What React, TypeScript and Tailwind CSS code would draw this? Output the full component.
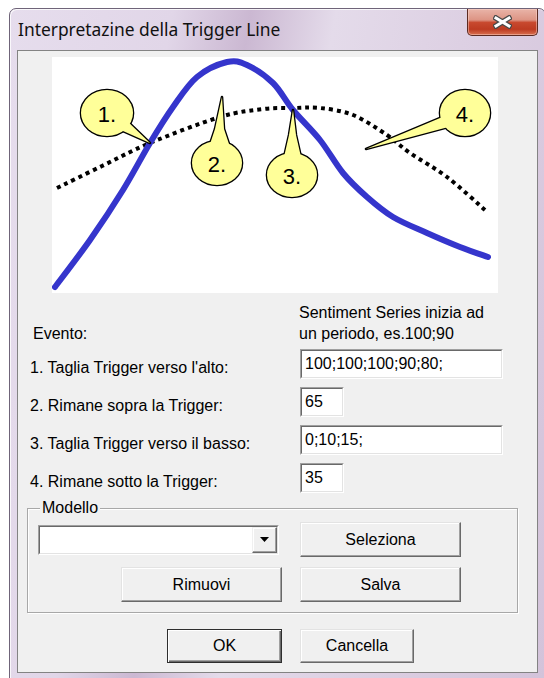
import React from 'react';

type Pt = [number, number];

// catmull-rom -> cubic bezier, so the curves come out smooth
const smooth = (pts: Pt[]) => {
  let d = `M${pts[0][0]} ${pts[0][1]}`;
  for (let i = 0; i < pts.length - 1; i++) {
    const p0 = pts[i - 1] || pts[i];
    const p1 = pts[i];
    const p2 = pts[i + 1];
    const p3 = pts[i + 2] || p2;
    const c1x = p1[0] + (p2[0] - p0[0]) / 6;
    const c1y = p1[1] + (p2[1] - p0[1]) / 6;
    const c2x = p2[0] - (p3[0] - p1[0]) / 6;
    const c2y = p2[1] - (p3[1] - p1[1]) / 6;
    d += ` C${c1x} ${c1y} ${c2x} ${c2y} ${p2[0]} ${p2[1]}`;
  }
  return d;
};

const blue: Pt[] = [
  [3, 230], [38, 183], [71, 133], [98, 86], [121, 50], [145, 20], [175, 5], [195, 8],
  [221, 26], [241, 53], [268, 83], [291, 116], [315, 140], [341, 160], [375, 176], [408, 190], [436, 200],
];

const dotted: Pt[] = [
  [5, 131], [50, 109], [98, 86], [168, 60], [211, 52], [241, 51], [268, 51], [301, 58],
  [335, 78], [358, 96], [395, 120], [433, 153],
];

const callouts = [
  { cx: 55, cy: 56, rx: 26, ry: 23, tail: '62,70 98,86 72,61', label: '1.' },
  { cx: 165, cy: 106, rx: 25, ry: 22, tail: '170,40 172,72 178,90 157,90 163,72', label: '2.' },
  { cx: 240, cy: 118, rx: 25, ry: 22, tail: '241,53 244,78 249,100 232,100 237,78', label: '3.' },
  { cx: 413, cy: 56, rx: 25, ry: 23, tail: '400,56 314,92 404,68', label: '4.' },
];

const Chart = () => (
  <svg width="446" height="236" viewBox="0 0 446 236">
    <path d={smooth(dotted)} fill="none" stroke="#000" strokeWidth="4" strokeDasharray="4 4" />
    <path d={smooth(blue)} fill="none" stroke="#3535cc" strokeWidth="6" strokeLinecap="round" />
    {callouts.map((c) => (
      <g key={c.label}>
        {/* outline of tail + bubble first, then the fill on top */}
        <polygon points={c.tail} fill="none" stroke="#000" strokeWidth="2.6" strokeLinejoin="round" />
        <ellipse cx={c.cx} cy={c.cy} rx={c.rx} ry={c.ry} fill="none" stroke="#000" strokeWidth="2.6" />
        <polygon points={c.tail} fill="#ffff99" />
        <ellipse cx={c.cx} cy={c.cy} rx={c.rx} ry={c.ry} fill="#ffff99" />
        <text
          x={c.cx}
          y={c.cy + 9}
          textAnchor="middle"
          fontSize="22"
          fontFamily="'Liberation Sans', Arial, sans-serif"
          fill="#000"
        >
          {c.label}
        </text>
      </g>
    ))}
  </svg>
);

const Field = ({ className, value }: { className: string; value: string }) => (
  <div className={`h-[30px] border border-t-[#a0a0a0] border-l-[#a0a0a0] border-b-white border-r-white ${className}`}>
    <div className="h-full flex items-center bg-white pl-[3px] border border-t-[#696969] border-l-[#696969] border-b-[#e3e3e3] border-r-[#e3e3e3] leading-none">
      {value}
    </div>
  </div>
);

const Btn = ({ className, children }: { className: string; children: React.ReactNode }) => (
  <button
    className={`flex items-center justify-center bg-[#f0f0f0] border border-t-[#e3e3e3] border-l-[#e3e3e3] border-b-[#696969] border-r-[#696969] shadow-[inset_-1px_-1px_0_#a0a0a0,inset_1px_1px_0_#ffffff] ${className}`}
  >
    {children}
  </button>
);

const rows = [
  { label: '1. Taglia Trigger verso l\'alto:', value: '100;100;100;90;80;', w: 'w-[203px]' },
  { label: '2. Rimane sopra la Trigger:', value: '65', w: 'w-[44px]' },
  { label: '3. Taglia Trigger verso il basso:', value: '0;10;15;', w: 'w-[203px]' },
  { label: '4. Rimane sotto la Trigger:', value: '35', w: 'w-[44px]' },
];

export default function App() {
  return (
    <div className="w-[544px] h-[678px] overflow-hidden bg-white pl-[9px] pt-[8px] font-['Liberation_Sans',Arial,sans-serif]">
      <div className="w-[537px] rounded-t-[7px] border border-[#6f6479] px-[7px] pb-[7px] bg-[linear-gradient(100deg,#e6dded_0%,#e1d6e8_25%,#cbb8d2_37%,#e4dbea_50%,#ddd0e3_70%,#d3c3da_100%)] shadow-[inset_1px_1px_0_rgba(255,255,255,0.8)]">
        {/* Title bar */}
        <div className="h-[41px] flex items-center justify-between">
          <span className="pl-[1px] text-[17.4px] text-[#111] font-['Noto_Sans',sans-serif]">Interpretazine della Trigger Line</span>
          <div className="self-start w-[71px] h-[27px] rounded-b-[5px] border border-t-0 border-[#5c2a22] flex items-center justify-center bg-[linear-gradient(180deg,#e9b4a8_0%,#dd9484_42%,#c8492f_52%,#bd3b22_78%,#d8704f_100%)] shadow-[inset_0_0_0_1px_rgba(255,220,210,0.45)]">
            <svg width="19" height="14" viewBox="0 0 19 14">
              <path d="M3 3 L16 11 M16 3 L3 11" stroke="#4a4a4a" strokeWidth="5.5" strokeLinecap="square" />
              <path d="M3 3 L16 11 M16 3 L3 11" stroke="#ffffff" strokeWidth="3" strokeLinecap="square" />
            </svg>
          </div>
        </div>

        {/* Client area */}
        <div className="h-[623px] flex flex-col border border-[#838383] bg-[#f0f0f0] text-[16px] text-black">
          <div className="ml-[34px] mt-[6px] w-[446px] h-[236px] bg-white">
            <Chart />
          </div>

          <div className="mt-[9px] pl-[12px] flex">
            <div className="w-[269px] self-end pl-[3px] leading-[21px]">Evento:</div>
            <div className="leading-[21px]">
              Sentiment Series inizia ad
              <br />
              un periodo, es.100;90
            </div>
          </div>

          <div className="mt-[5px] pl-[12px] flex flex-col gap-[8px]">
            {rows.map((r) => (
              <div key={r.label} className="h-[30px] flex items-center">
                <div className="w-[270px] pt-[7px] leading-[20px]">{r.label}</div>
                <Field className={r.w} value={r.value} />
              </div>
            ))}
          </div>

          <fieldset className="mt-[5px] ml-[9px] w-[491px] border border-[#a8a8a8] pl-[10px] pt-[4px] pb-[10px] shadow-[inset_1px_1px_0_#ffffff,1px_1px_0_#ffffff]">
            <legend className="ml-[2px] px-[2px] leading-[20px] bg-[#f0f0f0]">Modello</legend>
            <div className="grid grid-cols-[244px_161px] gap-x-[18px] gap-y-[10px]">
              <div className="self-center w-[241px] h-[30px] border border-t-[#a0a0a0] border-l-[#a0a0a0] border-b-white border-r-white">
                <div className="h-full flex justify-end bg-white border border-t-[#696969] border-l-[#696969] border-b-[#e3e3e3] border-r-[#e3e3e3]">
                  <div className="w-[25px] h-full flex items-center justify-center bg-[#f0f0f0] border border-t-[#f0f0f0] border-l-[#f0f0f0] border-b-[#696969] border-r-[#696969] shadow-[inset_-1px_-1px_0_#a0a0a0,inset_1px_1px_0_#ffffff]">
                    <svg width="9" height="5" viewBox="0 0 9 5">
                      <path d="M0 0 H9 L4.5 5 Z" fill="#000" />
                    </svg>
                  </div>
                </div>
              </div>
              <Btn className="h-[35px] w-[161px]">Seleziona</Btn>
              <Btn className="h-[35px] w-[161px] justify-self-end">Rimuovi</Btn>
              <Btn className="h-[35px] w-[161px]">Salva</Btn>
            </div>
          </fieldset>

          <div className="mt-[16px] pl-[149px] flex gap-[18px]">
            <button className="w-[115px] h-[34px] flex items-center justify-center bg-[#f0f0f0] border border-[#2e2e2e] shadow-[inset_1px_1px_0_#ffffff,inset_-1px_-1px_0_#696969,inset_-2px_-2px_0_#a0a0a0]">
              OK
            </button>
            <Btn className="h-[34px] w-[114px]">Cancella</Btn>
          </div>
        </div>
      </div>
    </div>
  );
}
